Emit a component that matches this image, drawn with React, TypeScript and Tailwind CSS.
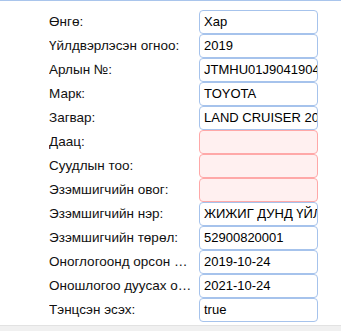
import React from "react";

type Row = { label: string; value: string; empty?: boolean };

const rows: Row[] = [
    { label: "Өнгө:", value: "Хар" },
    { label: "Үйлдвэрлэсэн огноо:", value: "2019" },
    { label: "Арлын №:", value: "JTMHU01J904190495" },
    { label: "Марк:", value: "TOYOTA" },
    { label: "Загвар:", value: "LAND CRUISER 200" },
    { label: "Даац:", value: "", empty: true },
    { label: "Суудлын тоо:", value: "", empty: true },
    { label: "Эзэмшигчийн овог:", value: "", empty: true },
    { label: "Эзэмшигчийн нэр:", value: "ЖИЖИГ ДУНД ҮЙЛДВЭР" },
    { label: "Эзэмшигчийн төрөл:", value: "52900820001" },
    { label: "Оноглогоонд орсон огноо:", value: "2019-10-24" },
    { label: "Оношлогоо дуусах огноо:", value: "2021-10-24" },
    { label: "Тэнцсэн эсэх:", value: "true" },
];

const App: React.FC = () => {
    return (
        <div className="w-[341px] h-[331px] bg-white flex flex-col overflow-hidden">
            <div className="border-t border-[#a9c5ec] pt-[9px] pb-[3px] pl-[49px]">
                {rows.map((r) => (
                    <div key={r.label} className="flex items-center h-[24px]">
                        <div className="w-[150px] pr-[6px] truncate text-[13.5px] text-[#111] font-['Tahoma','Liberation_Sans',sans-serif]">
                            {r.label}
                        </div>
                        <div
                            className={`w-[119px] h-[24px] shrink-0 rounded-[4px] border pl-[4px] flex items-center overflow-hidden whitespace-nowrap text-[13px] text-black font-['Liberation_Sans',Arial,sans-serif] ${
                                r.empty ? "border-[#ffa8a8] bg-[#fff0f0]" : "border-[#a6c3ec] bg-white"
                            }`}
                        >
                            {r.value}
                        </div>
                    </div>
                ))}
            </div>
            <div className="flex-1 bg-[#f0f0f0] border-t border-[#e2e2e2]" />
        </div>
    );
};

export default App;
